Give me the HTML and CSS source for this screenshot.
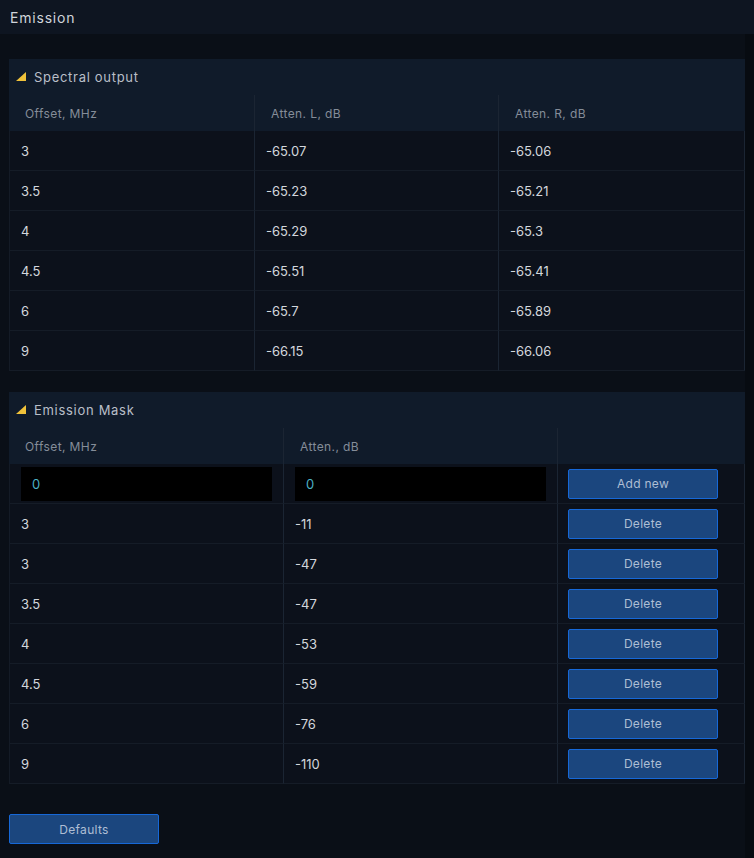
FILE: index.html
```html
<!DOCTYPE html>
<html>
<head>
<meta charset="utf-8">
<link rel="stylesheet" href="styles.css">
</head>
<body>
<div class="app">
  <header class="topbar">Emission</header>
  <div class="bodyrow">
  <main class="content">
    <section class="panel">
      <div class="panel-title"><span class="tri"></span>Spectral output</div>
      <div class="grid g3">
        <div class="th">Offset, MHz</div><div class="th">Atten. L, dB</div><div class="th">Atten. R, dB</div>
        <div class="td">3</div><div class="td">-65.07</div><div class="td">-65.06</div>
        <div class="td">3.5</div><div class="td">-65.23</div><div class="td">-65.21</div>
        <div class="td">4</div><div class="td">-65.29</div><div class="td">-65.3</div>
        <div class="td">4.5</div><div class="td">-65.51</div><div class="td">-65.41</div>
        <div class="td">6</div><div class="td">-65.7</div><div class="td">-65.89</div>
        <div class="td">9</div><div class="td">-66.15</div><div class="td">-66.06</div>
      </div>
    </section>

    <section class="panel">
      <div class="panel-title"><span class="tri"></span>Emission Mask</div>
      <div class="grid gm">
        <div class="th">Offset, MHz</div><div class="th">Atten., dB</div><div class="th"></div>
        <div class="td in"><div class="input">0</div></div><div class="td in"><div class="input">0</div></div><div class="td btncell"><button class="btn">Add new</button></div>
        <div class="td">3</div><div class="td">-11</div><div class="td btncell"><button class="btn">Delete</button></div>
        <div class="td">3</div><div class="td">-47</div><div class="td btncell"><button class="btn">Delete</button></div>
        <div class="td">3.5</div><div class="td">-47</div><div class="td btncell"><button class="btn">Delete</button></div>
        <div class="td">4</div><div class="td">-53</div><div class="td btncell"><button class="btn">Delete</button></div>
        <div class="td">4.5</div><div class="td">-59</div><div class="td btncell"><button class="btn">Delete</button></div>
        <div class="td">6</div><div class="td">-76</div><div class="td btncell"><button class="btn">Delete</button></div>
        <div class="td">9</div><div class="td">-110</div><div class="td btncell"><button class="btn">Delete</button></div>
      </div>
    </section>

    <div class="footer"><button class="btn wide">Defaults</button></div>
  </main>
  <div class="track"></div>
  </div>
</div>
</body>
</html>
```

FILE: styles.css
```css
* { box-sizing: border-box; }
html, body { margin: 0; padding: 0; }
body {
  background: #0a0f17;
  font-family: Inter, "Noto Sans", "DejaVu Sans", sans-serif;
  color: #d6dae0;
  width: 754px;
  height: 858px;
  overflow: hidden;
}
.app { display: flex; flex-direction: column; height: 858px; }
.topbar {
  height: 34px;
  flex: none;
  background: #0e1521;
  display: flex;
  align-items: center;
  padding-left: 10px;
  font-size: 14px;
  color: #d0d4da;
  letter-spacing: 0.8px;
}
.bodyrow { display: flex; flex: 1; }
.track { width: 9px; background: #070b11; }
.content {
  flex: 1;
  padding: 25px 0 0 9px;
  display: flex;
  flex-direction: column;
  gap: 21px;
}
.panel {
  background: #0c121c;
}
.panel-title {
  height: 36px;
  background: #101b2a;
  display: flex;
  align-items: center;
  padding-left: 7px;
  font-size: 13px;
  color: #b9bfc8;
  letter-spacing: 0.7px;
}
.tri {
  width: 10px;
  height: 9px;
  background: #f0c23a;
  clip-path: polygon(100% 0, 100% 100%, 0 100%);
  margin-right: 8px;
  margin-top: -1px;
}
.grid { display: grid; }
.g3 { grid-template-columns: 245px 244px 247px; }
.gm { grid-template-columns: 274px 274px 188px; }
.th {
  height: 36px;
  background: #101b2a;
  display: flex;
  align-items: center;
  padding-left: 16px;
  font-size: 12px;
  color: #858d99;
  letter-spacing: 0.4px;
  border-left: 1px solid #1b2533;
}
.td {
  height: 40px;
  display: flex;
  align-items: center;
  padding-left: 11px;
  font-size: 13px;
  color: #d3d7dd;
  border-left: 1px solid #1b2533;
  border-bottom: 1px solid #151c27;
  background: #0c111b;
}
.grid > .td:nth-child(3n+1) { border-left: 1px solid #141b26; }
.g3 > .th:first-child { border-left: none; }
.gm > .th:first-child { border-left: none; }
.grid > .td:nth-child(3n) { border-right: 1px solid #1b2533; }
.td.in { padding: 0 11px 0 11px; }
.input {
  width: 100%;
  height: 34px;
  background: #000;
  color: #4bb0c4;
  font-size: 13px;
  display: flex;
  align-items: center;
  padding-left: 11px;
}
.btncell { padding-left: 10px; }
.btn {
  width: 150px;
  height: 30px;
  background: #1b467e;
  border: 1px solid #1668d8;
  border-radius: 2px;
  color: #aebed4;
  font-family: Inter, "Noto Sans", "DejaVu Sans", sans-serif;
  font-size: 12px;
  letter-spacing: 0.3px;
  padding: 0;
}
.footer { padding-top: 9px; }
```
